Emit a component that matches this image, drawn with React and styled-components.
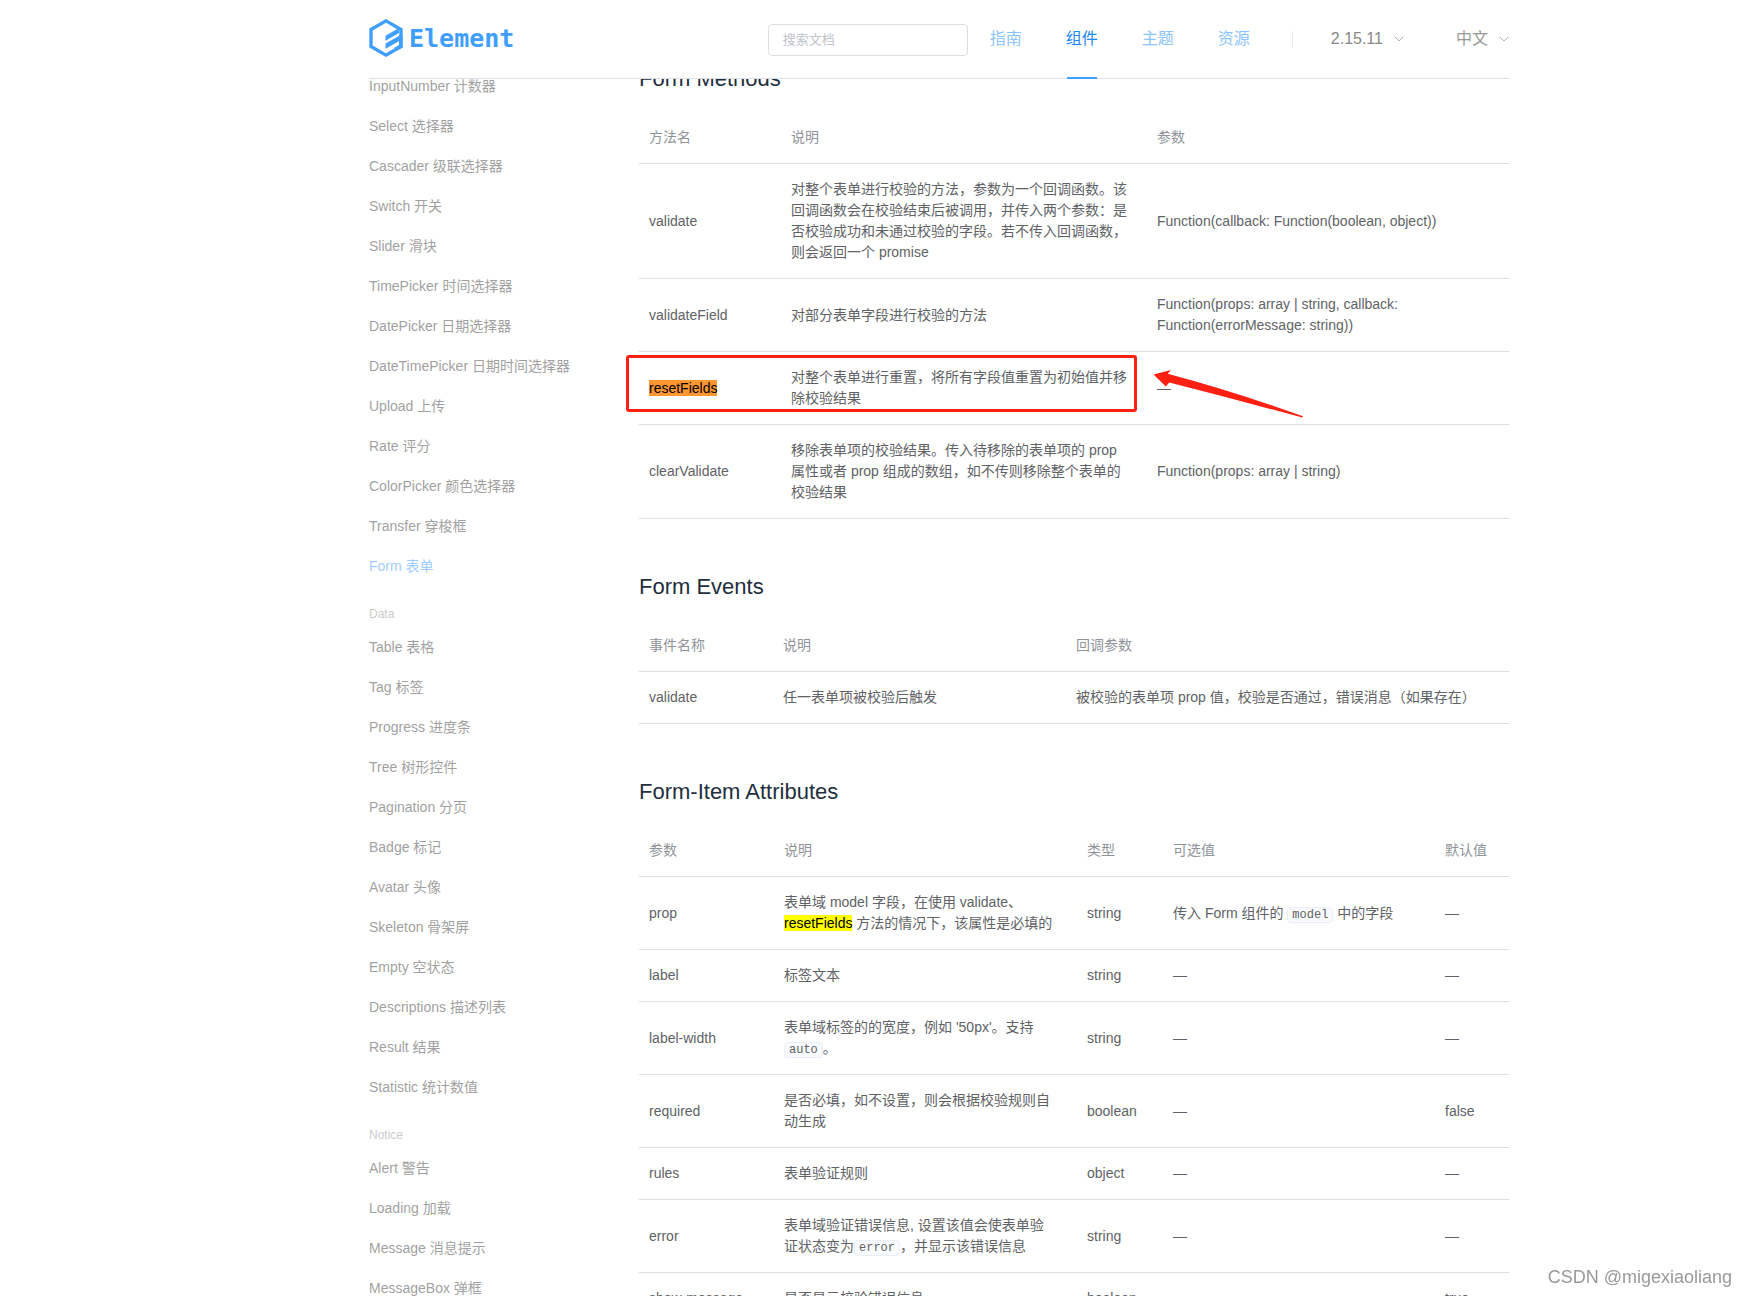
import React from 'react'
import styled, { createGlobalStyle } from 'styled-components'

const GlobalStyle = createGlobalStyle`
* {
    box-sizing: border-box;
}

body {
    margin: 0;
    background: #fff;
    font-family: "Liberation Sans", "Noto Sans CJK SC", sans-serif;
    font-size: 14px;
    overflow: hidden;
}

button, input {
    font-family: inherit;
}

a {
    text-decoration: none;
}
`

const Header = styled.header`
position: fixed;
top: 0;
left: 0;
right: 0;
z-index: 10;
padding: 0 238px 0 369px;
background: #fff;
`

const HeaderInner = styled.div`
display: flex;
align-items: center;
height: 79px;
border-bottom: 1px solid #dcdfe6;
`

const Logo = styled.a`
display: flex;
align-items: center;
gap: 6px;
margin-right: auto;
padding-bottom: 2px;
color: #409eff;
`

const LogoText = styled.span`
padding-top: 2px;
font-family: "DejaVu Sans Mono", monospace;
font-size: 25px;
font-weight: 700;
line-height: 30px;
`

const Search = styled.input`
width: 200px;
height: 32px;
margin-top: 2px;
padding: 0 14px 2px;
border: 1px solid #dcdfe6;
border-radius: 4px;
font-size: 13px;
color: #606266;
outline: none;

&::placeholder {
    color: #c0c4cc;
    opacity: 1;
}
`

const Nav = styled.nav`
display: flex;
align-self: stretch;
`

const NavLink = styled.a`
position: relative;
width: 76px;
font-size: 16px;
line-height: 78px;
text-align: center;
color: ${(p) => (p.$active ? '#1989fa' : '#8cc4fd')};

&::after {
    content: "";
    display: ${(p) => (p.$active ? 'block' : 'none')};
    position: absolute;
    left: 23px;
    right: 23px;
    bottom: -1px;
    height: 2px;
    background: #409eff;
}
`

const Divider = styled.span`
width: 1px;
height: 16px;
margin: 0 38px 0 20px;
background: #ebebeb;
`

const Drop = styled.button`
display: flex;
align-items: center;
gap: 11px;
margin-left: ${(p) => (p.$last ? '52px' : '0')};
padding: 0;
border: 0;
background: none;
font-size: 16px;
line-height: 24px;
color: ${(p) => (p.$last ? '#999' : '#888')};
`

const Page = styled.div`
display: flex;
height: 100vh;
padding: 66px 238px 0 369px;
overflow: hidden;
`

const Side = styled.aside`
flex: 0 0 240px;
margin-right: 30px;
opacity: 0.5;
`

const Group = styled.ul`
margin: 0;
padding: 0;
list-style: none;
`

const GroupTitle = styled.div`
margin-top: 15px;
font-size: 12px;
line-height: 26px;
color: #999;
`

const SideLink = styled.a`
display: block;
line-height: 40px;
white-space: nowrap;
color: ${(p) => (p.$active ? '#409eff' : '#444')};
`

const Content = styled.main`
flex: 1;
min-width: 0;
`

const Title = styled.h3`
margin: 55px 0 20px;
font-size: 22px;
font-weight: 400;
line-height: 26px;
color: #1f2f3d;

&:first-child {
    margin-top: 0;
}
`

const Table = styled.table`
width: 100%;
table-layout: fixed;
border-collapse: separate;
border-spacing: 0;
line-height: 21px;
color: #606266;

th, td {
    position: relative;
    padding: 15px;
    border-bottom: 1px solid #dcdfe6;
    font-weight: 400;
    text-align: left;
}

th {
    color: #909399;
}

th:first-child, td:first-child {
    padding-left: 10px;
}
`

const Col = styled.col`
width: ${(p) => p.$w};
`

const Found = styled.mark`
background: ${(p) => (p.$current ? '#ff9632' : '#ff0')};
color: #000;
`

const Code = styled.code`
padding: 0 4px;
border: 1px solid #eaeefb;
border-radius: 4px;
background: #f9fafc;
font-family: "Liberation Mono", monospace;
font-size: 12px;
line-height: 16px;
`

/* red frame drawn over the first two cells of the row */
const Frame = styled.span`
position: absolute;
top: 3px;
left: -13px;
z-index: 1;
width: 511px;
height: 57px;
border: 3px solid #ff2014;
border-radius: 3px;
pointer-events: none;
`

const ArrowSvg = styled.svg`
position: absolute;
top: 17px;
left: 11px;
`

const Watermark = styled.div`
position: fixed;
right: 15px;
bottom: 7px;
font-size: 18px;
line-height: 24px;
color: #999;
`

const links = ['指南', '组件', '主题', '资源']

const menu = [
  {
    items: [
      'InputNumber 计数器', 'Select 选择器', 'Cascader 级联选择器', 'Switch 开关', 'Slider 滑块',
      'TimePicker 时间选择器', 'DatePicker 日期选择器', 'DateTimePicker 日期时间选择器', 'Upload 上传',
      'Rate 评分', 'ColorPicker 颜色选择器', 'Transfer 穿梭框', 'Form 表单',
    ],
  },
  {
    title: 'Data',
    items: [
      'Table 表格', 'Tag 标签', 'Progress 进度条', 'Tree 树形控件', 'Pagination 分页', 'Badge 标记',
      'Avatar 头像', 'Skeleton 骨架屏', 'Empty 空状态', 'Descriptions 描述列表', 'Result 结果', 'Statistic 统计数值',
    ],
  },
  {
    title: 'Notice',
    items: ['Alert 警告', 'Loading 加载', 'Message 消息提示', 'MessageBox 弹框'],
  },
]

const methods = {
  title: 'Form Methods',
  widths: ['137px', '366px', 'auto'],
  head: ['方法名', '说明', '参数'],
  rows: [
    [
      'validate',
      '对整个表单进行校验的方法，参数为一个回调函数。该回调函数会在校验结束后被调用，并传入两个参数：是否校验成功和未通过校验的字段。若不传入回调函数，则会返回一个 promise',
      'Function(callback: Function(boolean, object))',
    ],
    ['validateField', '对部分表单字段进行校验的方法', 'Function(props: array | string, callback: Function(errorMessage: string))'],
    [
      <><Found $current>resetFields</Found><Frame /></>,
      '对整个表单进行重置，将所有字段值重置为初始值并移除校验结果',
      <>—<Arrow /></>,
    ],
    [
      'clearValidate',
      '移除表单项的校验结果。传入待移除的表单项的 prop 属性或者 prop 组成的数组，如不传则移除整个表单的校验结果',
      'Function(props: array | string)',
    ],
  ],
}

const events = {
  title: 'Form Events',
  widths: ['129px', '293px', 'auto'],
  head: ['事件名称', '说明', '回调参数'],
  rows: [
    ['validate', '任一表单项被校验后触发', '被校验的表单项 prop 值，校验是否通过，错误消息（如果存在）'],
  ],
}

const attributes = {
  title: 'Form-Item Attributes',
  widths: ['130px', '303px', '86px', '272px', 'auto'],
  head: ['参数', '说明', '类型', '可选值', '默认值'],
  rows: [
    [
      'prop',
      <>表单域 model 字段，在使用 validate、<Found>resetFields</Found> 方法的情况下，该属性是必填的</>,
      'string',
      <>传入 Form 组件的 <Code>model</Code> 中的字段</>,
      '—',
    ],
    ['label', '标签文本', 'string', '—', '—'],
    ['label-width', <>表单域标签的的宽度，例如 '50px'。支持 <Code>auto</Code>。</>, 'string', '—', '—'],
    ['required', '是否必填，如不设置，则会根据校验规则自动生成', 'boolean', '—', 'false'],
    ['rules', '表单验证规则', 'object', '—', '—'],
    ['error', <>表单域验证错误信息, 设置该值会使表单验证状态变为<Code>error</Code>，并显示该错误信息</>, 'string', '—', '—'],
    ['show-message', '是否显示校验错误信息', 'boolean', '—', 'true'],
  ],
}

function Arrow() {
  return (
    <ArrowSvg width="152" height="50" viewBox="0 0 152 50" aria-hidden="true">
      <path d="M0.5 5.5 L18 1 L14.7 4.7 Q80 22 150 47.3 L149.3 48.6 Q85 31 16.3 13.5 L12.8 17.6 Z" fill="#ff2014" />
    </ArrowSvg>
  )
}

function Chevron() {
  return (
    <svg width="10" height="6" viewBox="0 0 10 6" aria-hidden="true">
      <path d="M0.7 0.7 L5 5 L9.3 0.7" fill="none" stroke="#b4b4b4" />
    </svg>
  )
}

function DocTable({ title, widths, head, rows }) {
  return (
    <>
      <Title>{title}</Title>
      <Table>
        <colgroup>
          {widths.map((w, i) => <Col key={i} $w={w} />)}
        </colgroup>
        <thead>
          <tr>{head.map((h) => <th key={h} scope="col">{h}</th>)}</tr>
        </thead>
        <tbody>
          {rows.map((row, i) => (
            <tr key={i}>{row.map((cell, j) => <td key={j}>{cell}</td>)}</tr>
          ))}
        </tbody>
      </Table>
    </>
  )
}

const App = () => {
  return (
    <>
    <GlobalStyle />
    <Header>
      <HeaderInner>
        <Logo href="#" aria-label="Element">
          <svg width="34" height="38" viewBox="0 0 34 38" aria-hidden="true">
            <path d="M17 1.9 L32 10.5 V27.5 L17 36.1 L2 27.5 V10.5 Z" fill="none" stroke="#409eff" strokeWidth="3.4" />
            <path d="M16.5 16.8 L30 9 V14 L16.5 21.8 Z" fill="#409eff" />
            <path d="M16.5 24.6 L33 15.2 V20.4 L16.5 29.8 Z" fill="#409eff" />
            <path d="M26 20 L33.6 16 V28.5 L27 32 L25.5 28.8 L30 26 L30 22 Z" fill="#409eff" />
          </svg>
          <LogoText>Element</LogoText>
        </Logo>
        <Search type="text" placeholder="搜索文档" aria-label="搜索文档" />
        <Nav>
          {links.map((l) => <NavLink key={l} href="#" $active={l === '组件'}>{l}</NavLink>)}
        </Nav>
        <Divider />
        <Drop type="button">2.15.11<Chevron /></Drop>
        <Drop type="button" $last>中文<Chevron /></Drop>
      </HeaderInner>
    </Header>

    <Page>
      <Side>
        {menu.map((group, i) => (
          <React.Fragment key={i}>
            {group.title && <GroupTitle>{group.title}</GroupTitle>}
            <Group>
              {group.items.map((item) => (
                <li key={item}><SideLink href="#" $active={item === 'Form 表单'}>{item}</SideLink></li>
              ))}
            </Group>
          </React.Fragment>
        ))}
      </Side>
      <Content>
        <DocTable {...methods} />
        <DocTable {...events} />
        <DocTable {...attributes} />
      </Content>
    </Page>
    <Watermark>CSDN @migexiaoliang</Watermark>
    </>
  )
}

export default App
